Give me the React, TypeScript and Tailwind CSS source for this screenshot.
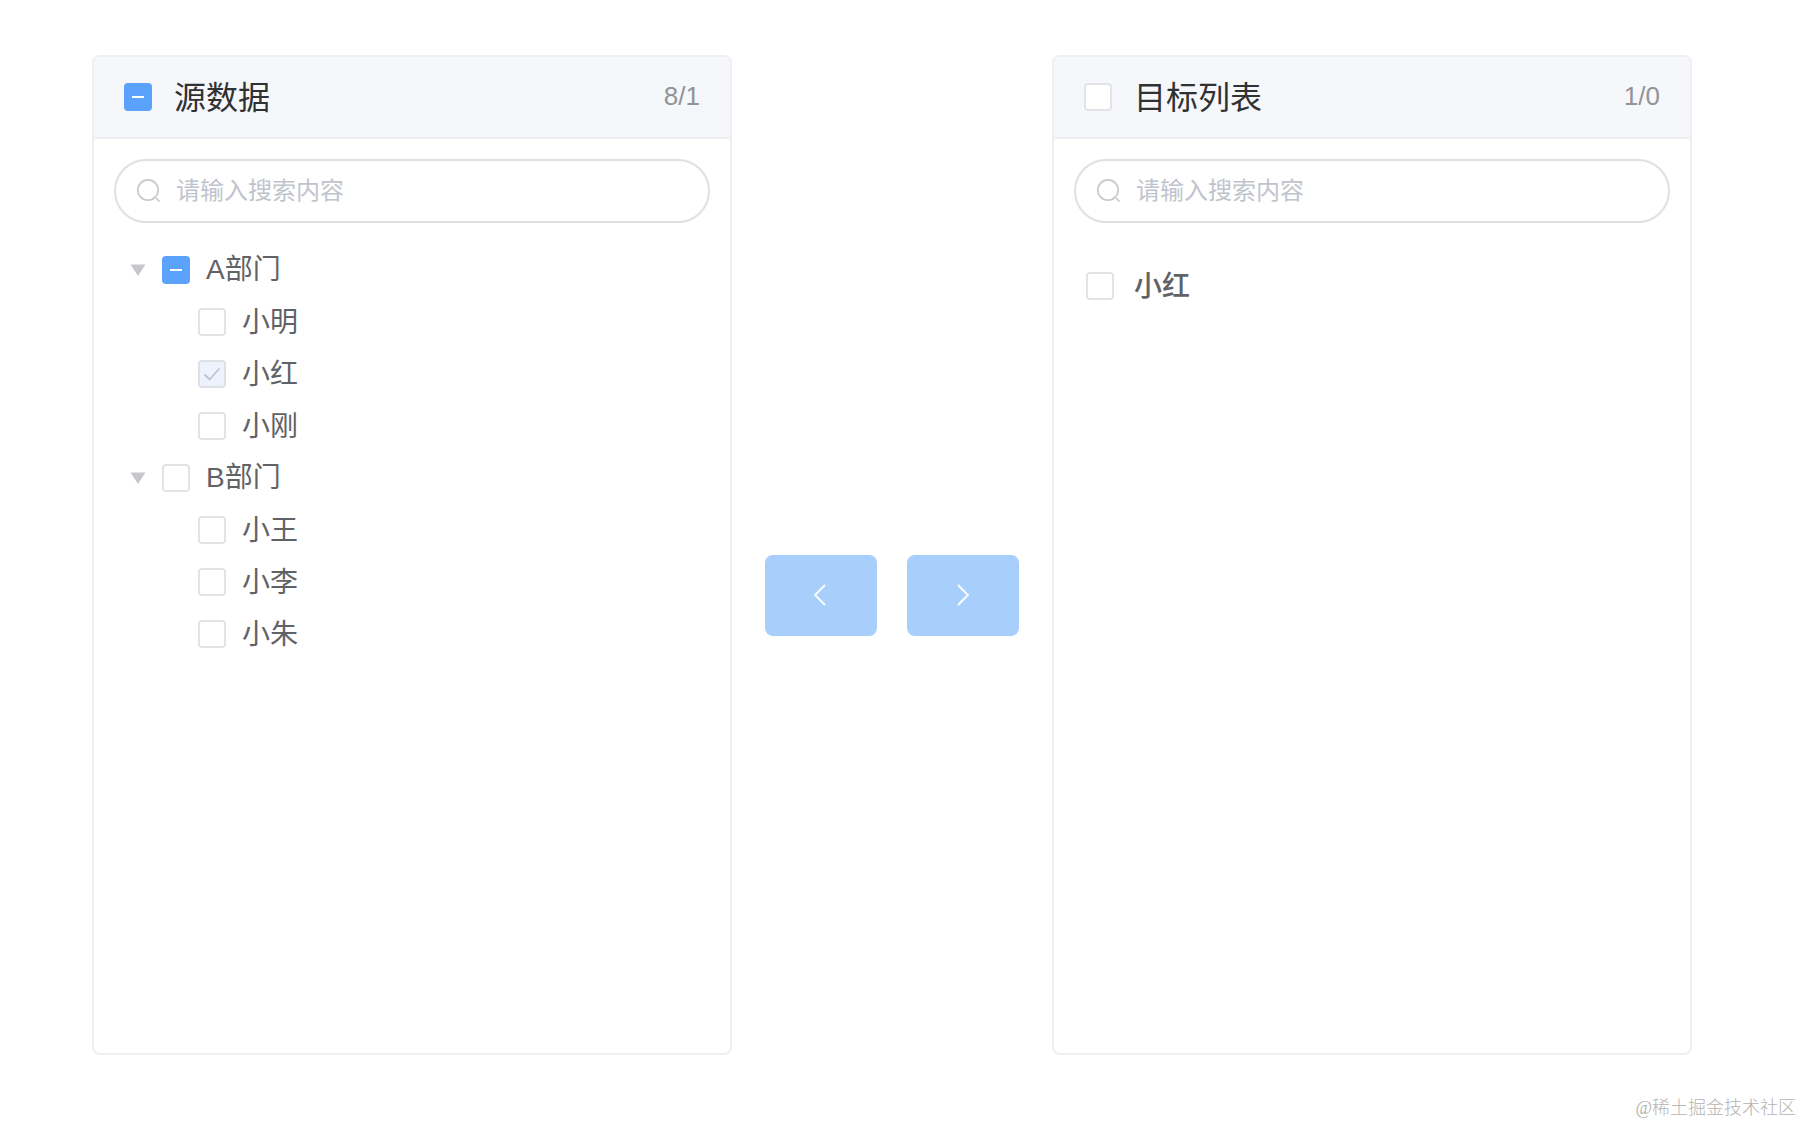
import React from "react";

const font = { fontFamily: '"Liberation Sans", "Noto Sans CJK SC", sans-serif' };

function Check({ state = "off", size = "" }: { state?: "off" | "half" | "checked"; size?: string }) {
  if (state === "half")
    return (
      <span className={`flex h-[28px] w-[28px] shrink-0 items-center justify-center rounded-[4px] bg-[#5aa2fb] ${size}`}>
        <span className="h-[2px] w-[12px] bg-white" />
      </span>
    );
  if (state === "checked")
    return (
      <span className={`flex h-[28px] w-[28px] shrink-0 items-center justify-center rounded-[4px] border-2 border-[#dfe0e4] bg-[#edf2fc] ${size}`}>
        <svg width="18" height="14" viewBox="0 0 18 14" fill="none">
          <path d="M1.5 7.5 L6.5 12.5 L16.5 1.5" stroke="#c0c4cc" strokeWidth="1.8" />
        </svg>
      </span>
    );
  return <span className={`block h-[28px] w-[28px] shrink-0 rounded-[4px] border-2 border-[#e2e3e6] bg-white ${size}`} />;
}

function Search() {
  return (
    <div className="flex h-[64px] items-center rounded-full border-2 border-[#dfe0e3] bg-white pl-[20px]">
      <svg width="26" height="26" viewBox="0 0 26 26" fill="none" className="shrink-0">
        <circle cx="12" cy="12" r="10.2" stroke="#c6c8ce" strokeWidth="1.7" />
        <path d="M20 20 L23.5 23.5" stroke="#c6c8ce" strokeWidth="1.7" />
      </svg>
      <span className="ml-[14px] text-[24px] leading-none text-[#c0c4cc]">请输入搜索内容</span>
    </div>
  );
}

function Panel({
  title,
  count,
  state,
  children,
}: {
  title: string;
  count: string;
  state: "off" | "half";
  children: React.ReactNode;
}) {
  return (
    <section className="flex h-[1000px] w-[640px] shrink-0 flex-col overflow-hidden rounded-[8px] border-2 border-[#eeeff2] bg-white">
      <header className="flex h-[82px] shrink-0 items-center border-b-2 border-[#eeeff2] bg-[#f5f7fa] px-[30px]">
        <Check state={state} />
        <span className="ml-[22px] pt-[1px] text-[32px] leading-none text-[#303133]">{title}</span>
        <span className="ml-auto pb-[2px] text-[26px] leading-none text-[#909399]">{count}</span>
      </header>
      <div className="flex-1 px-[20px] pt-[20px]">
        <Search />
        {children}
      </div>
    </section>
  );
}

function Arrow() {
  return (
    <svg width="16" height="14" viewBox="0 0 16 14" className="shrink-0">
      <path d="M0.5 0.5 H15.5 L8 12 Z" fill="#c6c7ca" transform="translate(0 1)" />
    </svg>
  );
}

function Parent({ label, state }: { label: string; state: "off" | "half" }) {
  return (
    <div className="flex h-[52px] items-center pl-[16px]">
      <Arrow />
      <Check state={state} size="ml-[16px]" />
      <span className="ml-[16px] text-[28px] leading-none text-[#606266]">{label}</span>
    </div>
  );
}

function Child({ label, state = "off" }: { label: string; state?: "off" | "checked" }) {
  return (
    <div className="flex h-[52px] items-center pl-[84px]">
      <Check state={state} />
      <span className="ml-[16px] pt-[1px] text-[28px] leading-none text-[#606266]">{label}</span>
    </div>
  );
}

function Btn({ dir }: { dir: "l" | "r" }) {
  return (
    <button className="flex h-[81px] w-[112px] items-center justify-center rounded-[8px] bg-[#a8cffb] pb-[2px]">
      <svg width="14" height="22" viewBox="0 0 14 22" fill="none">
        <path d={dir === "l" ? "M11 1 L1 11 L11 21" : "M2 1 L12 11 L2 21"} stroke="#ffffff" strokeWidth="1.8" />
      </svg>
    </button>
  );
}

export default function App() {
  return (
    <div className="relative h-[1124px] w-[1802px] overflow-hidden bg-white" style={font}>
      <div className="flex items-center pl-[92px] pt-[55px]">
        <Panel title="源数据" count="8/1" state="half">
          <div className="pt-[21px]">
            <Parent label="A部门" state="half" />
            <Child label="小明" />
            <Child label="小红" state="checked" />
            <Child label="小刚" />
            <Parent label="B部门" state="off" />
            <Child label="小王" />
            <Child label="小李" />
            <Child label="小朱" />
          </div>
        </Panel>
        <div className="mt-[81px] flex w-[320px] shrink-0 justify-center gap-[30px]">
          <Btn dir="l" />
          <Btn dir="r" />
        </div>
        <Panel title="目标列表" count="1/0" state="off">
          <div className="flex items-center pl-[12px] pt-[48px]">
            <Check />
            <span className="ml-[20px] pt-[2px] text-[28px] font-medium leading-[28px] text-[#606266]">小红</span>
          </div>
        </Panel>
      </div>
      <span
        className="absolute bottom-[4px] right-[6px] text-[18px] leading-[24px] text-[#b4b4b4]"
        style={{ fontFamily: '"Liberation Serif", "Noto Sans CJK SC", serif', fontWeight: 300 }}
      >
        @稀土掘金技术社区
      </span>
    </div>
  );
}
